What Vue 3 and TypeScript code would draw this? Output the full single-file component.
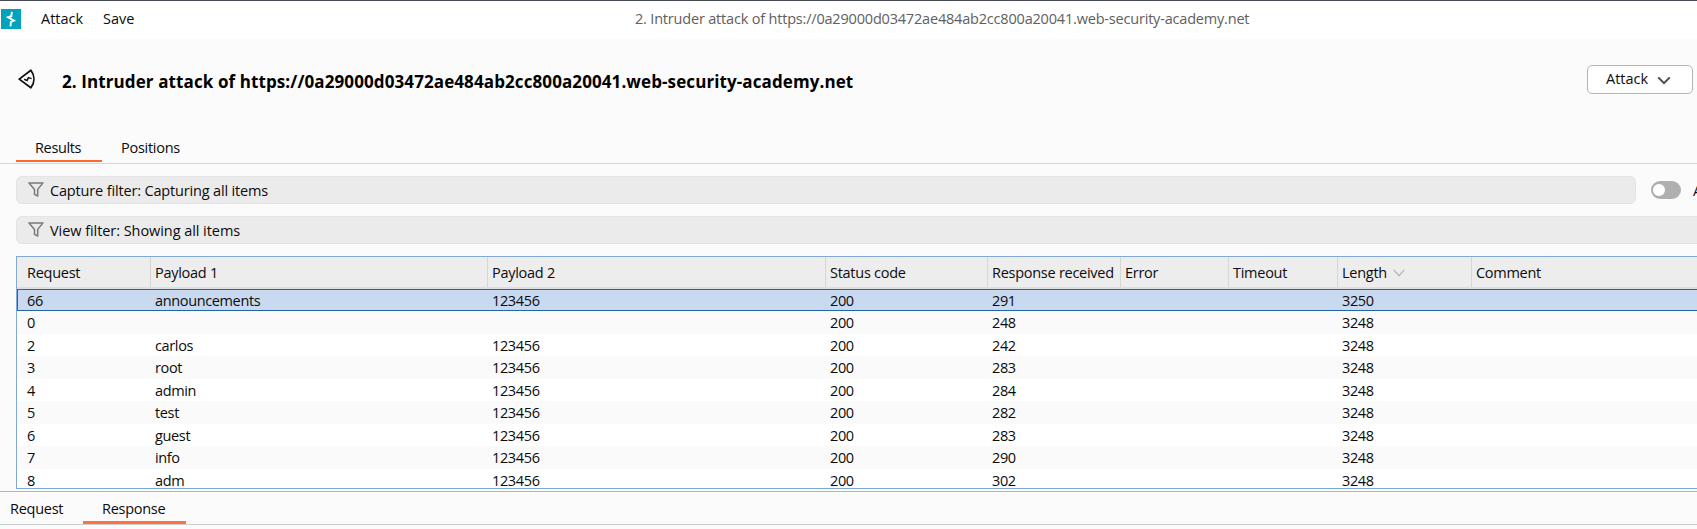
<script setup lang="ts">
interface Column { key: string; label: string }
interface AttackRow {
  request: string
  payload1?: string
  payload2?: string
  status: string
  received: string
  length: string
}

const columns: Column[] = [
  { key: 'request', label: 'Request' },
  { key: 'payload1', label: 'Payload 1' },
  { key: 'payload2', label: 'Payload 2' },
  { key: 'status', label: 'Status code' },
  { key: 'received', label: 'Response received' },
  { key: 'error', label: 'Error' },
  { key: 'timeout', label: 'Timeout' },
  { key: 'length', label: 'Length' },
  { key: 'comment', label: 'Comment' },
]

const rows: AttackRow[] = [
  { request: '66', payload1: 'announcements', payload2: '123456', status: '200', received: '291', length: '3250' },
  { request: '0', status: '200', received: '248', length: '3248' },
  { request: '2', payload1: 'carlos', payload2: '123456', status: '200', received: '242', length: '3248' },
  { request: '3', payload1: 'root', payload2: '123456', status: '200', received: '283', length: '3248' },
  { request: '4', payload1: 'admin', payload2: '123456', status: '200', received: '284', length: '3248' },
  { request: '5', payload1: 'test', payload2: '123456', status: '200', received: '282', length: '3248' },
  { request: '6', payload1: 'guest', payload2: '123456', status: '200', received: '283', length: '3248' },
  { request: '7', payload1: 'info', payload2: '123456', status: '200', received: '290', length: '3248' },
  { request: '8', payload1: 'adm', payload2: '123456', status: '200', received: '302', length: '3248' },
]

const title = '2. Intruder attack of https://0a29000d03472ae484ab2cc800a20041.web-security-academy.net'

const cell = (row: AttackRow, key: string): string => (row as unknown as Record<string, string | undefined>)[key] ?? ''
</script>

<template>
  <div class="window">
    <header class="menubar">
      <svg class="logo" viewBox="0 0 20 20">
        <rect width="20" height="20" fill="#00a3bb" />
        <path d="M10.9 2.8L10.3 7.2L7 8.3L13 11.6L9.9 13L9.5 17.4" fill="none" stroke="#fff" stroke-width="1.9" />
      </svg>
      <span class="menu attack-menu">Attack</span>
      <span class="menu save-menu">Save</span>
      <span class="window-title">{{ title }}</span>
    </header>

    <section class="heading">
      <svg class="attack-icon" viewBox="0 0 18 20">
        <path d="M1.2 10.1L12.9 1.3C16.9 6.7 16.9 13.4 12.9 18.8Z" fill="none" stroke="#111" stroke-width="1.8" stroke-linejoin="round" />
        <path d="M6.2 10.3L9.1 11.6L10.4 8.6L13.6 9.6" fill="none" stroke="#111" stroke-width="1.5" />
      </svg>
      <h1>{{ title }}</h1>
      <button class="attack-button" type="button">
        Attack
        <svg viewBox="0 0 14 9"><path d="M1.2 1.4L7 7.2L12.8 1.4" fill="none" stroke="#4c4c4c" stroke-width="2" /></svg>
      </button>
    </section>

    <nav class="tabs">
      <span class="tab active">Results</span>
      <span class="tab positions">Positions</span>
    </nav>

    <div class="filter-row">
      <div class="filter">
        <svg viewBox="0 0 16 15"><path d="M1 .9H15L9.7 7.4V14L6.5 12.4V7.4Z" fill="none" stroke="#7b7b7b" stroke-width="1.5" stroke-linejoin="round" /></svg>
        <span class="capture-text">Capture filter: Capturing all items</span>
      </div>
      <span class="toggle"><i></i></span>
      <span class="toggle-label">A</span>
    </div>
    <div class="filter-row">
      <div class="filter wide">
        <svg viewBox="0 0 16 15"><path d="M1 .9H15L9.7 7.4V14L6.5 12.4V7.4Z" fill="none" stroke="#7b7b7b" stroke-width="1.5" stroke-linejoin="round" /></svg>
        <span class="view-text">View filter: Showing all items</span>
      </div>
    </div>

    <section class="results">
      <div class="grid head">
        <div v-for="c in columns" :key="c.key" class="cell">
          {{ c.label }}
          <svg v-if="c.key === 'length'" viewBox="0 0 12 8"><path d="M.7 .9L6 6.7L11.3 .9" fill="none" stroke="#b5b5b5" stroke-width="1.3" /></svg>
        </div>
      </div>
      <div v-for="(r, i) in rows" :key="r.request" class="grid row" :class="{ selected: i === 0 }">
        <div v-for="c in columns" :key="c.key" class="cell">{{ cell(r, c.key) }}</div>
      </div>
    </section>

    <footer class="message-tabs">
      <span class="request-tab">Request</span>
      <span class="response-tab">Response</span>
    </footer>
  </div>
</template>

<style>
body {
  background: #fbfbfb;
  overflow: hidden;
}
</style>

<style scoped>
.window {
  box-sizing: border-box;
  width: 1697px;
  height: 529px;
  overflow: hidden;
  background: #fbfbfb;
  border-top: 1px solid #464a55;
  color: #0c0c0c;
  font: 14.5px/24px "Open Sans", "Noto Sans", sans-serif;
  letter-spacing: -0.27px;
  white-space: nowrap;
}
svg {
  display: block;
  flex: none;
}
.menubar {
  display: flex;
  align-items: center;
  height: 38px;
  background: #fff;
}
.logo {
  width: 20px;
  height: 20px;
  margin: -2px 0 0 1px;
}
.menu {
  margin-top: -3px;
  letter-spacing: 0;
}
.attack-menu {
  width: 62px;
  margin-left: 20px;
}
.save-menu {
  width: 532px;
}
.window-title {
  margin-top: -3px;
  color: #606060;
  letter-spacing: -0.19px;
}
.heading {
  display: flex;
  align-items: flex-start;
  height: 91px;
}
.attack-icon {
  width: 18px;
  height: 20px;
  margin: 30px 0 0 18px;
}
h1 {
  flex: 1;
  margin: 31px 0 0 26px;
  font-size: 17px;
  line-height: 24px;
  letter-spacing: 0.1px;
  font-weight: 700;
  color: #000;
}
.attack-button {
  box-sizing: border-box;
  display: flex;
  align-items: center;
  justify-content: space-between;
  width: 106px;
  height: 29px;
  margin: 26px 4px 0 0;
  padding: 0 21px 1px 18px;
  border: 1px solid #b9b4b4;
  border-radius: 5px;
  background: #fff;
  color: inherit;
  font: inherit;
}
.attack-button svg {
  width: 14px;
  height: 9px;
  margin-top: 2px;
}
.tabs {
  box-sizing: border-box;
  display: flex;
  height: 34px;
  padding-left: 16px;
  border-bottom: 1px solid #d5dad9;
}
.tab {
  box-sizing: border-box;
  height: 33px;
  padding-top: 6px;
}
.tab.active {
  width: 86px;
  height: 32px;
  padding-left: 19px;
  border-bottom: 2px solid #ff6633;
  letter-spacing: -0.35px;
}
.positions {
  margin-left: 19px;
}
.filter-row {
  display: flex;
  align-items: center;
  height: 28px;
  margin: 12px 0 0 16px;
}
.filter {
  box-sizing: border-box;
  display: flex;
  flex: none;
  align-items: center;
  width: 1620px;
  height: 28px;
  padding-left: 11px;
  border: 1px solid #e4e4e4;
  border-radius: 6px;
  background: #ebebeb;
}
.filter.wide {
  width: 1700px;
}
.filter svg {
  width: 16px;
  height: 15px;
  margin: -1px 6px 0 0;
}
.filter span {
  margin-top: 2px;
}
.capture-text {
  letter-spacing: -0.16px;
}
.view-text {
  letter-spacing: -0.06px;
}
.toggle {
  box-sizing: border-box;
  flex: none;
  width: 30px;
  height: 18px;
  margin-left: 15px;
  padding: 3px 2px;
  border-radius: 9px;
  background: #afafaf;
}
.toggle i {
  display: block;
  width: 12px;
  height: 12px;
  border-radius: 50%;
  background: #fff;
}
.toggle-label {
  margin: 2px 0 0 12px;
}
.results {
  box-sizing: border-box;
  width: 1700px;
  height: 233px;
  margin: 12px 0 0 16px;
  overflow: hidden;
  border: 1px solid #80a9d8;
  background: #fff;
}
.grid {
  display: grid;
  grid-template-columns: 133px 337px 338px 162px 133px 108px 109px 134px 1fr;
}
.cell {
  padding-left: 5px;
}
.cell:first-child {
  padding-left: 10px;
}
.head {
  box-sizing: border-box;
  height: 31.5px;
  border-bottom: 2px solid #dedede;
  background: #ededed;
}
.head .cell {
  box-sizing: border-box;
  display: flex;
  align-items: center;
  height: 30px;
  padding-top: 2px;
  box-shadow: inset 1px 0 #d6d6d6;
}
.head .cell:first-child {
  box-shadow: none;
}
.head svg {
  width: 12px;
  height: 8px;
  margin-left: 6px;
}
.row {
  height: 22.5px;
  letter-spacing: -0.36px;
}
.row:nth-child(odd) {
  background: #fafafa;
}
.row.selected {
  background: #c9d9f0;
  box-shadow: inset 0 0 0 1px #2565a0;
}
.message-tabs {
  box-sizing: border-box;
  display: flex;
  height: 34px;
  margin-top: 2px;
  border-top: 1px solid #b9b5b5;
  border-bottom: 1px solid #cacece;
}
.request-tab {
  width: 73px;
  padding: 5px 0 0 10px;
}
.response-tab {
  box-sizing: border-box;
  width: 103px;
  height: 32px;
  padding: 5px 0 0 19px;
  border-bottom: 3px solid #ff7043;
}
</style>
